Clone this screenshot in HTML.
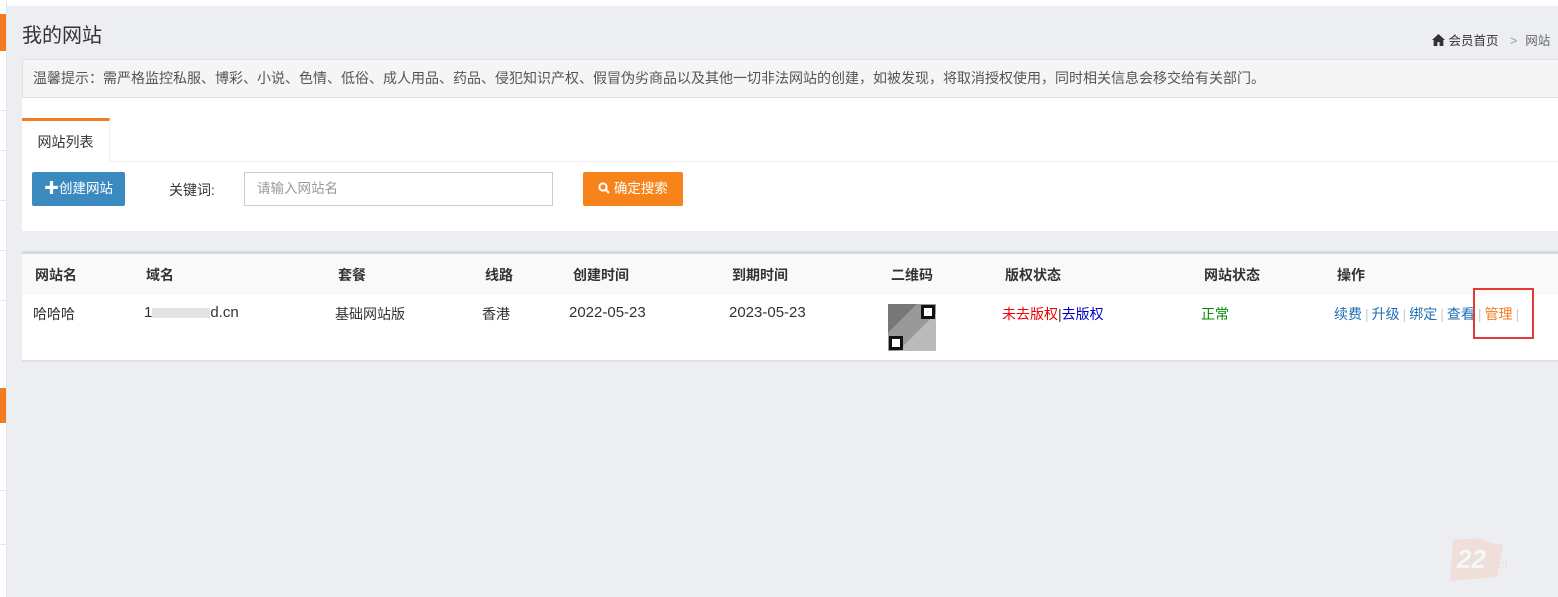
<!DOCTYPE html>
<html><head><meta charset="utf-8"><style>
*{margin:0;padding:0;box-sizing:border-box}
body{width:1558px;height:597px;overflow:hidden;background:#eceef2;font-family:"Liberation Sans","Noto Sans CJK SC",sans-serif;font-size:13px;color:#333;position:relative}
.abs{position:absolute}
.sep{color:#ccc;margin:0 3px}
</style></head><body>
<div class="abs" style="left:0;top:0;width:1558px;height:6px;background:#fff"></div>
<div class="abs" style="left:0;top:0;width:7px;height:597px;background:#fff;border-right:1px solid #e3e5ea"></div>
<div class="abs" style="left:0;top:14px;width:6px;height:37px;background:#f47b20"></div>
<div class="abs" style="left:0;top:388px;width:6px;height:35px;background:#f47b20"></div>
<div class="abs" style="left:0;top:110px;width:6px;height:1px;background:#e6e6e6"></div>
<div class="abs" style="left:0;top:150px;width:6px;height:1px;background:#e6e6e6"></div>
<div class="abs" style="left:0;top:200px;width:6px;height:1px;background:#e6e6e6"></div>
<div class="abs" style="left:0;top:250px;width:6px;height:1px;background:#e6e6e6"></div>
<div class="abs" style="left:0;top:300px;width:6px;height:1px;background:#e6e6e6"></div>
<div class="abs" style="left:0;top:490px;width:6px;height:1px;background:#e6e6e6"></div>
<div class="abs" style="left:0;top:544px;width:6px;height:1px;background:#e6e6e6"></div>

<div class="abs" style="left:22px;top:19px;font-size:20px;color:#333">我的网站</div>
<div class="abs" style="left:1432px;top:30px;font-size:12.5px;color:#333;white-space:nowrap">
<svg width="13" height="12" viewBox="0 0 12 11" style="vertical-align:-1px"><path d="M6 0L0 5.5h1.5V11h3.5V7.5h2V11h3.5V5.5H12z" fill="#333"/></svg> 会员首页 <span style="color:#999;margin:0 8px">&gt;</span><span style="color:#666">网站</span></div>

<div class="abs" style="left:22px;top:59px;width:1540px;height:39px;background:#f5f5f5;border:1px solid #e0e0e0;font-size:14px;color:#555;line-height:37px;padding-left:10px;white-space:nowrap">温馨提示：需严格监控私服、博彩、小说、色情、低俗、成人用品、药品、侵犯知识产权、假冒伪劣商品以及其他一切非法网站的创建，如被发现，将取消授权使用，同时相关信息会移交给有关部门。</div>

<div class="abs" style="left:22px;top:98px;width:1540px;height:133px;background:#fff"></div>
<div class="abs" style="left:22px;top:161px;width:1540px;height:1px;background:#eee"></div>
<div class="abs" style="left:22px;top:118px;width:88px;height:44px;background:#fff;border-top:3px solid #f47b20;border-right:1px solid #eee;font-size:14px;line-height:42px;text-align:center;color:#333">网站列表</div>
<div class="abs" style="left:32px;top:172px;width:93px;height:34px;background:#3a8ac0;border-radius:2px;color:#fff;font-size:13.5px;line-height:34px;text-align:center"><b style="font-size:15px">✚</b>创建网站</div>
<div class="abs" style="left:169px;top:180px;font-size:14px">关键词:</div>
<div class="abs" style="left:244px;top:172px;width:309px;height:34px;border:1px solid #ccc;background:#fff;color:#999;font-size:13.5px;line-height:32px;padding-left:12px">请输入网站名</div>
<div class="abs" style="left:583px;top:172px;width:100px;height:34px;background:#f7841b;border-radius:2px;color:#fff;font-size:13.5px;line-height:34px;text-align:center"><svg width="12" height="12" viewBox="0 0 12 12" style="vertical-align:-1px"><circle cx="5" cy="5" r="3.6" stroke="#fff" stroke-width="2" fill="none"/><path d="M7.5 7.5L11 11" stroke="#fff" stroke-width="2.2"/></svg> 确定搜索</div>

<div class="abs" style="left:22px;top:251px;width:1540px;height:111px;background:#fff;border-top:3px solid #d6d9de;border-bottom:2px solid #dde0e4"></div>
<div class="abs" style="left:22px;top:254px;width:1540px;height:41px;background:#f9f9f9"></div>
<div class="abs" style="top:265px;left:0;width:1558px;font-weight:bold;font-size:14px;color:#333;white-space:nowrap">
<span class="abs" style="left:35px">网站名</span><span class="abs" style="left:146px">域名</span><span class="abs" style="left:338px">套餐</span><span class="abs" style="left:485px">线路</span><span class="abs" style="left:573px">创建时间</span><span class="abs" style="left:732px">到期时间</span><span class="abs" style="left:891px">二维码</span><span class="abs" style="left:1005px">版权状态</span><span class="abs" style="left:1204px">网站状态</span><span class="abs" style="left:1337px">操作</span></div>
<div class="abs" style="top:304px;left:0;width:1558px;font-size:14px;color:#333;white-space:nowrap">
<span class="abs" style="left:33px">哈哈哈</span>
<span class="abs" style="left:144px;font-size:15px">1<span style="display:inline-block;width:58px;height:10px;background:#e3e3e3;vertical-align:middle"></span>d.cn</span>
<span class="abs" style="left:335px">基础网站版</span><span class="abs" style="left:482px">香港</span>
<span class="abs" style="left:569px;font-size:15px">2022-05-23</span><span class="abs" style="left:729px;font-size:15px">2023-05-23</span>
<span class="abs" style="left:1002px"><span style="color:#e00">未去版权</span>|<span style="color:#00c">去版权</span></span>
<span class="abs" style="left:1201px;color:#080">正常</span>
<span class="abs" style="left:1334px;color:#1f6fb5">续费<span class="sep">|</span>升级<span class="sep">|</span>绑定<span class="sep">|</span>查看<span class="sep">|</span><span style="color:#f47b20">管理</span><span class="sep">|</span></span></div>
<div class="abs" style="left:888px;top:304px;width:48px;height:47px;background:linear-gradient(135deg,#777 0 30%,#999 30% 60%,#bbb 60%);"></div>
<div class="abs" style="left:921px;top:305px;width:14px;height:14px;border:3px solid #111;background:#fff"></div>
<div class="abs" style="left:889px;top:336px;width:14px;height:14px;border:3px solid #111;background:#fff"></div>
<div class="abs" style="left:1473px;top:288px;width:61px;height:51px;border:2px solid #e53935"></div>

<svg class="abs" style="left:1445px;top:535px;opacity:.55" width="75" height="50" viewBox="0 0 75 50"><path d="M8 5L35 3L45 8L58 10L52 42L5 46Z" fill="#f5d2c4"/><text x="12" y="33" font-family="Liberation Sans" font-weight="bold" font-style="italic" font-size="26" fill="#fff">22</text><text x="48" y="33" font-family="Liberation Sans" font-size="11" fill="#f5c9b8">.cn</text></svg>
</body></html>
